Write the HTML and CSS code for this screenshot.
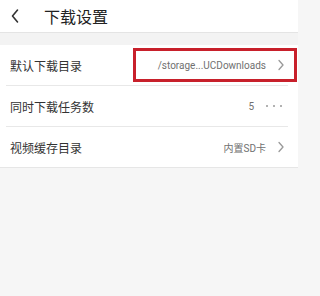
FILE: index.html
```html
<!DOCTYPE html>
<html lang="zh">
<head>
<meta charset="utf-8">
<link rel="stylesheet" href="styles.css">
</head>
<body>
<div class="page">
<div class="header">
  <svg class="back" width="10" height="16" viewBox="0 0 10 16"><path d="M7.5 2 L2.5 8 L7.5 14" fill="none" stroke="#333" stroke-width="1.6" stroke-linecap="round" stroke-linejoin="round"/></svg>
  <span class="title">下载设置</span>
</div>
<div class="gap"></div>
<div class="list">
  <div class="row">
    <span class="label">默认下载目录</span>
    <span class="value">/storage...UCDownloads</span>
    <svg class="chev" width="8" height="12" viewBox="0 0 8 12"><path d="M2 1.5 L6 6 L2 10.5" fill="none" stroke="#999" stroke-width="1.3" stroke-linecap="round" stroke-linejoin="round"/></svg>
    <div class="highlight"></div>
  </div>
  <div class="row">
    <span class="label">同时下载任务数</span>
    <span class="value">5</span>
    <span class="dots"><i></i><i></i><i></i></span>
  </div>
  <div class="row last">
    <span class="label">视频缓存目录</span>
    <span class="value">内置SD卡</span>
    <svg class="chev" width="8" height="12" viewBox="0 0 8 12"><path d="M2 1.5 L6 6 L2 10.5" fill="none" stroke="#999" stroke-width="1.3" stroke-linecap="round" stroke-linejoin="round"/></svg>
  </div>
</div>
</div>
</body>
</html>
```
FILE: styles.css
```css
html, body {
  margin: 0;
  padding: 0;
  background: #f6f6f6;
  font-family: "Noto Sans CJK SC", "Noto Sans", sans-serif;
}
.page {
  width: 298px;
  height: 296px;
  overflow: hidden;
}
.header {
  height: 32px;
  background: #fff;
  border-bottom: 1px solid #e4e4e4;
  display: flex;
  align-items: center;
  padding-left: 10px;
}
.back {
  display: block;
}
.title {
  margin-left: 24px;
  font-size: 16px;
  color: #222;
  line-height: 1;
}
.gap {
  height: 12px;
  background: #f3f3f3;
}
.list {
  background: #fff;
  border-bottom: 1px solid #e6e6e6;
  padding: 0 10px 0 6px;
}
.row {
  position: relative;
  height: 40px;
  border-bottom: 1px solid #e8e8e8;
  display: flex;
  align-items: center;
  padding-left: 4px;
}
.row.last {
  border-bottom: none;
}
.label {
  font-size: 12px;
  color: #333;
  flex: 1;
}
.value {
  font-size: 10px;
  color: #707070;
  font-family: Roboto, "Noto Sans CJK SC", sans-serif;
}
.chev {
  margin-left: 11px;
  margin-right: 3px;
  display: block;
}
.dots {
  display: flex;
  gap: 5px;
  margin-left: 12px;
  margin-right: 6px;
}
.dots i {
  width: 2px;
  height: 2px;
  border-radius: 50%;
  background: #999;
}
.highlight {
  position: absolute;
  right: -9px;
  top: 3px;
  width: 158px;
  height: 28px;
  border: 3px solid #c8202b;
}
```
